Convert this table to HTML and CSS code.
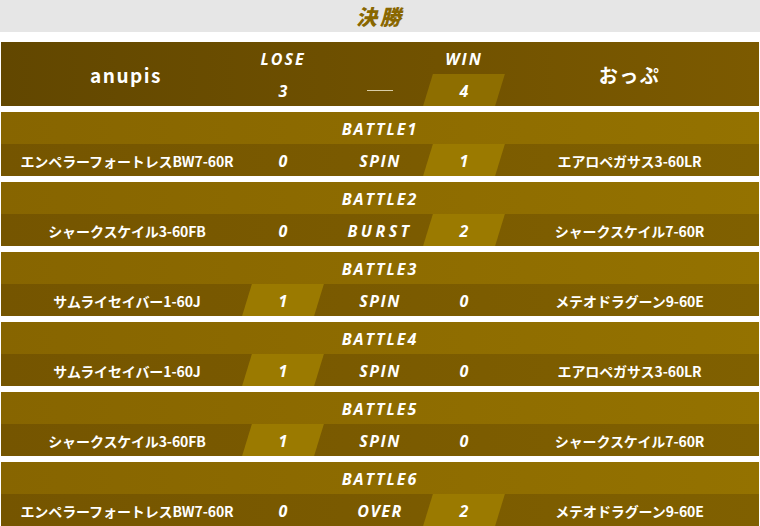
FILE: index.html
```html
<!DOCTYPE html>
<html lang="ja">
<head>
  <meta charset="UTF-8" />
  <title>決勝</title>
  <link rel="stylesheet" href="styles.css">
</head>
<body>
  <h1 class="title">決勝</h1>

  <div class="summary">
    <div class="player">anupis</div>
    <div class="label">LOSE</div>
    <div class="label mid"></div>
    <div class="label">WIN</div>
    <div class="player">おっぷ</div>
    <div class="score">3</div>
    <div class="mid"><span class="dash"></span></div>
    <div class="score win">4</div>
  </div>

  <div class="battle">
    <div class="battle-title">BATTLE1</div>
    <div class="row">
      <div class="bey">エンペラーフォートレスBW7-60R</div>
      <div class="score">0</div>
      <div class="finish">SPIN</div>
      <div class="score win">1</div>
      <div class="bey">エアロペガサス3-60LR</div>
    </div>
  </div>

  <div class="battle">
    <div class="battle-title">BATTLE2</div>
    <div class="row">
      <div class="bey">シャークスケイル3-60FB</div>
      <div class="score">0</div>
      <div class="finish wide">BURST</div>
      <div class="score win">2</div>
      <div class="bey">シャークスケイル7-60R</div>
    </div>
  </div>

  <div class="battle">
    <div class="battle-title">BATTLE3</div>
    <div class="row">
      <div class="bey">サムライセイバー1-60J</div>
      <div class="score win">1</div>
      <div class="finish">SPIN</div>
      <div class="score">0</div>
      <div class="bey">メテオドラグーン9-60E</div>
    </div>
  </div>

  <div class="battle">
    <div class="battle-title">BATTLE4</div>
    <div class="row">
      <div class="bey">サムライセイバー1-60J</div>
      <div class="score win">1</div>
      <div class="finish">SPIN</div>
      <div class="score">0</div>
      <div class="bey">エアロペガサス3-60LR</div>
    </div>
  </div>

  <div class="battle">
    <div class="battle-title">BATTLE5</div>
    <div class="row">
      <div class="bey">シャークスケイル3-60FB</div>
      <div class="score win">1</div>
      <div class="finish">SPIN</div>
      <div class="score">0</div>
      <div class="bey">シャークスケイル7-60R</div>
    </div>
  </div>

  <div class="battle">
    <div class="battle-title">BATTLE6</div>
    <div class="row">
      <div class="bey">エンペラーフォートレスBW7-60R</div>
      <div class="score">0</div>
      <div class="finish">OVER</div>
      <div class="score win">2</div>
      <div class="bey">メテオドラグーン9-60E</div>
    </div>
  </div>
</body>
</html>
```

FILE: styles.css
```css
* {
  box-sizing: border-box;
}

body {
  margin: 0;
  padding: 0;
  background-color: #ffffff;
  color: #ffffff;
  font-family: "Open Sans", "Noto Sans CJK JP", sans-serif;
}

.title {
  margin: 0 0 10px;
  height: 32px;
  line-height: 32px;
  background-color: #e6e6e6;
  color: #896700;
  font-family: "Noto Sans CJK JP", sans-serif;
  font-size: 21px;
  font-style: italic;
  font-weight: 900;
  letter-spacing: 3px;
  text-align: center;
}

.summary,
.row {
  display: grid;
  grid-template-columns: 246px 72px 109px 72px 1fr;
  align-items: center;
}

.summary {
  margin: 0 1px 6px;
  height: 64px;
  grid-template-rows: 32px 32px;
  background: linear-gradient(to right, #624700, #7c5a00);
}

.player {
  grid-row: span 2;
  text-align: center;
  font-family: "Noto Sans CJK JP", sans-serif;
  font-size: 19px;
  font-weight: bold;
  letter-spacing: 1.5px;
}

.player:first-child {
  padding-left: 4px;
}

.label {
  padding-top: 2px;
  text-align: center;
  font-size: 16px;
  font-style: italic;
  font-weight: bold;
  letter-spacing: 2px;
}

.mid {
  display: flex;
  justify-content: center;
  padding-left: 13px;
}

.dash {
  display: block;
  width: 26px;
  height: 1px;
  background-color: #d9cda6;
}

.score {
  position: relative;
  height: 100%;
  display: flex;
  align-items: center;
  justify-content: center;
  padding-top: 1px;
  font-size: 16px;
  font-style: italic;
  font-weight: bold;
  z-index: 0;
}

.score.win::before {
  content: "";
  position: absolute;
  inset: 0;
  background-color: #9b7a00;
  transform: skewX(-17deg);
  z-index: -1;
}

.summary .score.win::before {
  background-color: #8e6e00;
}

.battle {
  margin: 0 1px 6px;
  height: 64px;
}

.battle-title {
  height: 32px;
  line-height: 34px;
  background: linear-gradient(to right, #876500, #947200);
  text-align: center;
  font-size: 16px;
  font-style: italic;
  font-weight: bold;
  letter-spacing: 2px;
}

.row {
  height: 32px;
  background: linear-gradient(to right, #755500, #806000);
}

.bey {
  padding-top: 1px;
  text-align: center;
  font-family: "Noto Sans CJK JP", sans-serif;
  font-size: 14px;
  font-weight: bold;
  letter-spacing: -0.1px;
}

.row .bey:first-child {
  padding-left: 6px;
}

.finish {
  padding-left: 13px;
  padding-top: 1px;
  text-align: center;
  font-size: 16px;
  font-style: italic;
  font-weight: bold;
  letter-spacing: 1.5px;
}

.finish.wide {
  letter-spacing: 3.5px;
}
```
